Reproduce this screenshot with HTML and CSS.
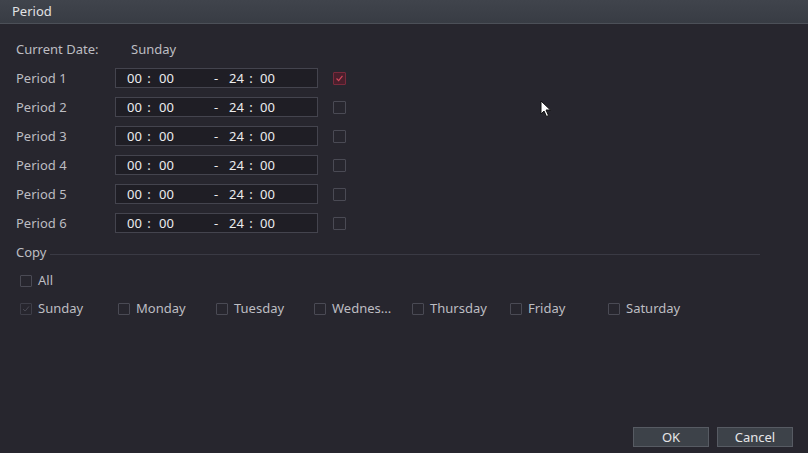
FILE: index.html
```html
<!DOCTYPE html>
<html>
<head>
<meta charset="utf-8">
<link rel="stylesheet" href="styles.css">
</head>
<body>
<div class="win">
  <div class="titlebar">Period</div>
  <div class="content">
    <div class="row date-row">
      <div class="label">Current Date:</div>
      <div class="date-val">Sunday</div>
    </div>
    <div class="row">
      <div class="label">Period 1</div>
      <div class="timebox"><span class="h">00</span><span class="c">:</span><span class="m">00</span><span class="d">-</span><span class="h">24</span><span class="c">:</span><span class="m">00</span></div>
      <span class="cb cb-red"><svg viewBox="0 0 13 13" width="13" height="13"><path d="M3 6.5 L5.5 9 L10 3.5" fill="none" stroke="#d0485c" stroke-width="1.4"/></svg></span>
    </div>
    <div class="row">
      <div class="label">Period 2</div>
      <div class="timebox"><span class="h">00</span><span class="c">:</span><span class="m">00</span><span class="d">-</span><span class="h">24</span><span class="c">:</span><span class="m">00</span></div>
      <span class="cb"></span>
    </div>
    <div class="row">
      <div class="label">Period 3</div>
      <div class="timebox"><span class="h">00</span><span class="c">:</span><span class="m">00</span><span class="d">-</span><span class="h">24</span><span class="c">:</span><span class="m">00</span></div>
      <span class="cb"></span>
    </div>
    <div class="row">
      <div class="label">Period 4</div>
      <div class="timebox"><span class="h">00</span><span class="c">:</span><span class="m">00</span><span class="d">-</span><span class="h">24</span><span class="c">:</span><span class="m">00</span></div>
      <span class="cb"></span>
    </div>
    <div class="row">
      <div class="label">Period 5</div>
      <div class="timebox"><span class="h">00</span><span class="c">:</span><span class="m">00</span><span class="d">-</span><span class="h">24</span><span class="c">:</span><span class="m">00</span></div>
      <span class="cb"></span>
    </div>
    <div class="row">
      <div class="label">Period 6</div>
      <div class="timebox"><span class="h">00</span><span class="c">:</span><span class="m">00</span><span class="d">-</span><span class="h">24</span><span class="c">:</span><span class="m">00</span></div>
      <span class="cb"></span>
    </div>
    <div class="copy-head">
      <span class="copy-label">Copy</span>
      <span class="copy-line"></span>
    </div>
    <div class="all-row">
      <span class="cb cb-small"></span><span class="day-text">All</span>
    </div>
    <div class="days">
      <div class="day"><span class="cb cb-small cb-dim"><svg viewBox="0 0 12 12" width="12" height="12"><path d="M2.5 6 L5 8.5 L9.5 3" fill="none" stroke="#4a4a54" stroke-width="1.2"/></svg></span><span class="day-text">Sunday</span></div>
      <div class="day"><span class="cb cb-small"></span><span class="day-text">Monday</span></div>
      <div class="day"><span class="cb cb-small"></span><span class="day-text">Tuesday</span></div>
      <div class="day"><span class="cb cb-small"></span><span class="day-text">Wednes...</span></div>
      <div class="day"><span class="cb cb-small"></span><span class="day-text">Thursday</span></div>
      <div class="day"><span class="cb cb-small"></span><span class="day-text">Friday</span></div>
      <div class="day"><span class="cb cb-small"></span><span class="day-text">Saturday</span></div>
    </div>
  </div>
  <div class="footer">
    <button class="btn">OK</button>
    <button class="btn">Cancel</button>
  </div>
  <svg class="cursor" viewBox="0 0 12 18" width="12" height="18"><path d="M1 1 L1 14 L4 11 L6.5 16.5 L8.5 15.5 L6 10 L10.5 10 Z" fill="#ffffff" stroke="#111" stroke-width="1"/></svg>
</div>
</body>
</html>
```
FILE: styles.css
```css
html, body {
  margin: 0;
  padding: 0;
  background: #27262e;
}
body {
  font-family: "Noto Sans", "Open Sans", sans-serif;
  font-size: 13px;
  color: #c4c4c8;
}
.win {
  position: relative;
  width: 808px;
  height: 453px;
  background: #27262e;
  display: flex;
  flex-direction: column;
}
.titlebar {
  height: 23px;
  line-height: 22px;
  padding-left: 12px;
  background: linear-gradient(#40444c, #383c44);
  border-bottom: 1px solid #4c5058;
  color: #e2e2e4;
  font-size: 13px;
}
.content {
  padding: 0 0 0 16px;
  flex: 1;
}
.row {
  display: flex;
  align-items: center;
  height: 29px;
}
.date-row {
  margin-top: 10px;
}
.label {
  width: 99px;
  color: #bdbdc2;
}
.date-val {
  padding-left: 16px;
  color: #bdbdc2;
}
.timebox {
  width: 201px;
  height: 18px;
  border: 1px solid #44444e;
  background: #1f1e25;
  display: flex;
  align-items: center;
  color: #ececee;
  font-size: 13px;
  box-sizing: content-box;
}
.timebox span { display: inline-block; }
.timebox .h:first-child { margin-left: 11px; }
.timebox .h { width: 16px; }
.timebox .c { width: 12px; text-align: center; }
.timebox .m { width: 16px; margin-left: 4px; }
.timebox .m:last-child { margin-left: 3px; }
.timebox .d { width: 6px; margin-left: 39px; margin-right: 9px; }
.cb {
  display: inline-flex;
  align-items: center;
  justify-content: center;
  width: 11px;
  height: 11px;
  border: 1px solid #4a4a54;
  border-radius: 1px;
  margin-left: 15px;
  margin-top: 2px;
}
.cb-red {
  background: #4a1f2c;
  border-color: #7a2a3c;
}
.cb svg { display: block; }
.copy-head {
  display: flex;
  align-items: center;
  height: 18px;
  margin-top: 6px;
}
.copy-label {
  color: #bdbdc2;
  width: 34px;
}
.copy-line {
  height: 1px;
  width: 710px;
  background: #3a3a44;
  margin-top: 5px;
}
.all-row {
  display: flex;
  align-items: center;
  height: 28px;
  margin-top: 5px;
  padding-left: 4px;
}
.cb-small {
  width: 10px;
  height: 10px;
  margin-left: 0;
  margin-right: 6px;
  margin-top: 1px;
}
.cb-dim { border-color: #3e3e48; }
.day-text { color: #bdbdc2; }
.days {
  display: flex;
  align-items: center;
  height: 28px;
  padding-left: 4px;
}
.day {
  width: 98px;
  display: flex;
  align-items: center;
}
.footer {
  display: flex;
  justify-content: flex-end;
  gap: 8px;
  padding: 0 15px 6px 0;
}
.btn {
  width: 76px;
  height: 20px;
  background: #3d4249;
  border: 1px solid #575b63;
  color: #e6e6e8;
  font-family: "Noto Sans", "Open Sans", sans-serif;
  font-size: 13px;
  padding: 0;
  line-height: 18px;
}
.cursor {
  position: absolute;
  left: 540px;
  top: 100px;
}
```
